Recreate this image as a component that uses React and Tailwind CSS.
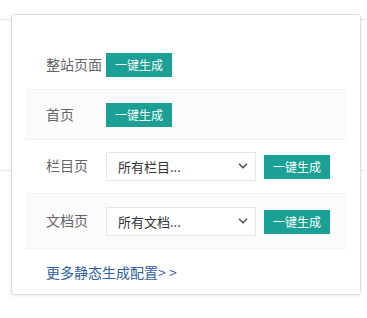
import { ChevronDown } from "lucide-react";

const rows = [
  { label: "整站页面" },
  { label: "首页", alt: true },
  { label: "栏目页", select: "所有栏目..." },
  { label: "文档页", select: "所有文档...", alt: true },
];

const App = () => {
  return (
    <div
      className="relative h-[318px] w-[367px] overflow-hidden bg-white"
      style={{ fontFamily: '"Noto Sans CJK SC", "Noto Sans", sans-serif' }}
    >
      {/* page behind the popover */}
      <div className="h-[20px] border-b border-[#e6e6e6]" />
      <div className="h-[151px] border-b border-[#ececec]" />

      {/* popover */}
      <div className="absolute left-[11px] top-[14px] w-[350px] rounded-[3px] border border-[#dedede] bg-white px-[14px] pt-[26px] pb-[12px] shadow-[0_1px_4px_rgba(0,0,0,0.08)]">
        {rows.map((row) => (
          <div
            key={row.label}
            className={`flex items-center border-b border-[#f2f2f2] pl-[20px] pb-3 ${
              row.alt ? "bg-[#fbfbfb] pt-[13px]" : "pt-3"
            }`}
          >
            <span className="mb-[3px] w-[60px] text-[14px] leading-5 text-[#666]">
              {row.label}
            </span>
            {row.select && (
              <div className="relative mr-2 h-[29px] w-[150px]">
                <select className="h-full w-full appearance-none border border-[#e6e6e6] bg-white pl-[11px] text-[13px] text-[#333] outline-none">
                  <option>{row.select}</option>
                </select>
                <ChevronDown
                  size={14}
                  strokeWidth={3}
                  className="pointer-events-none absolute right-[6px] top-[7px] text-[#555]"
                />
              </div>
            )}
            <button className="h-[24px] w-[66px] bg-[#1aa094] text-[12px] leading-[24px] text-white">
              一键生成
            </button>
          </div>
        ))}

        <a
          href="#"
          className="mt-[13px] ml-[20px] block text-[14px] leading-5 text-[#2e5ea6]"
        >
          更多静态生成配置&gt; &gt;
        </a>
      </div>
    </div>
  );
};

export default App;
